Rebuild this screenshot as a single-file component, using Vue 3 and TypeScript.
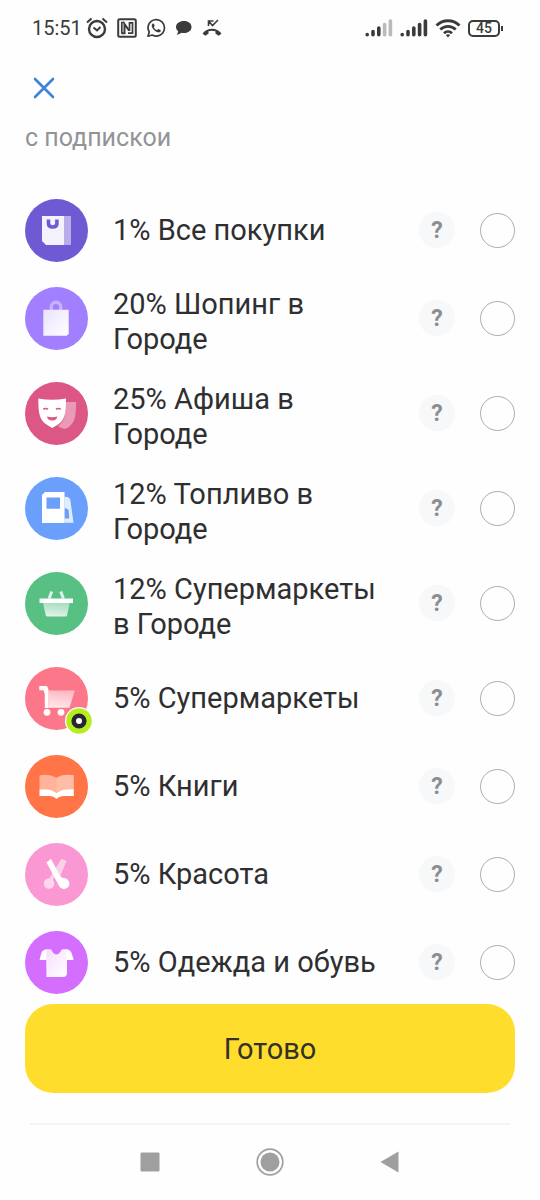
<script setup lang="ts">
import { ref } from 'vue'

interface Category {
  id: string
  title: string
  color: string
  badge?: boolean
}

const categories: Category[] = [
  { id: 'all', title: '1% Все покупки', color: '#6f5ad3' },
  { id: 'shopping', title: '20% Шопинг в Городе', color: '#a27fff' },
  { id: 'events', title: '25% Афиша в Городе', color: '#dc5686' },
  { id: 'fuel', title: '12% Топливо в Городе', color: '#6aa0fb' },
  { id: 'city-market', title: '12% Супермаркеты в Городе', color: '#58c083' },
  { id: 'market', title: '5% Супермаркеты', color: '#fd778b', badge: true },
  { id: 'books', title: '5% Книги', color: '#ff7547' },
  { id: 'beauty', title: '5% Красота', color: '#f998d3' },
  { id: 'clothes', title: '5% Одежда и обувь', color: '#d56dfe' },
]

const selected = ref<string[]>([])
</script>

<template>
  <div class="screen">
    <div class="status">
      <span class="time">15:51</span>
      <div class="status-left">
        <svg width="22" height="22" viewBox="0 0 22 22" fill="none" stroke="#3b3b3b" stroke-width="2.4">
          <circle cx="11" cy="12" r="8" />
          <path d="M1 5.500 5.500 1.500M21 5.500 16.500 1.500" stroke-width="2" />
          <path d="M7.500 10.500 11 13.500l3.500-3.500" stroke-width="2" />
        </svg>
        <svg width="20" height="20" viewBox="0 0 20 20" fill="none" stroke="#3b3b3b" stroke-width="2">
          <rect x="1.200" y="1.200" width="17.600" height="17.600" rx="1.500" />
          <path d="M4.500 15.200h3V6.200l4.700 6.500" />
          <path d="M4.800 15.500v-11h2.700M11 15.200h4.500V4.800h-3V13" stroke-width="1.700" />
        </svg>
        <svg width="20" height="20" viewBox="0 0 20 20">
          <path d="M2 18.200 3.200 14A8.200 8.200 0 1 1 6.300 17Z" fill="none" stroke="#3b3b3b" stroke-width="1.700" stroke-linejoin="round" />
          <path d="M7 5.500c-2 1-1.500 4 1 6.500s5.600 3.200 6.700 1.200c.3-.7.100-1-.4-1.300l-1.700-.8c-.8-.2-1 1.100-1.700.9-1.300-.4-2.500-1.500-3-2.800-.2-.7.900-.9.700-1.700L8 5.900c-.2-.4-.5-.6-1-.4Z" fill="#3b3b3b" />
        </svg>
        <svg width="17" height="16" viewBox="0 0 17 16" fill="#3b3b3b">
          <path d="M9 1c4.500 0 7.500 2.500 7.500 6S13.500 13 9 13c-.8 0-1.500-.1-2.200-.2L2 15l1.200-3.700C1.800 10.200 1 8.700 1 7c0-3.500 3.500-6 8-6Z" />
        </svg>
        <svg width="22" height="20" viewBox="0 0 22 20">
          <path d="M1.500 15.500C6 9 16 9 20.500 15.500l-2.600 2.300-3.400-2v-2.500c-2.200-.8-4.800-.8-7 0v2.500l-3.400 2Z" fill="#3b3b3b" />
          <path d="m8 3.500 3.500 4L17 2M7.500 8V3h5" fill="none" stroke="#3b3b3b" stroke-width="1.600" />
        </svg>
      </div>
      <div class="status-right">
        <svg v-for="n in 2" :key="n" width="28" height="18" viewBox="0 0 28 18" stroke-width="3.600" stroke-linecap="round" stroke="#3b3b3b">
          <path d="M2.200 15.500v.3M8 12.500v3.300M13.800 9v6.800" />
          <path d="M19.600 5.500v10.300M25.400 2v13.800" :stroke="n === 1 ? '#bababa' : '#3b3b3b'" />
        </svg>
        <svg width="26" height="20" viewBox="0 0 26 20" fill="none" stroke="#3b3b3b" stroke-width="2.800">
          <path d="M1.500 7.500a16.300 16.300 0 0 1 23 0M5.300 11.500a11 11 0 0 1 15.400 0M9 15.200a5.700 5.700 0 0 1 8 0" />
          <path d="m10.800 17 2.200 2.500 2.200-2.500q-2.200-1.600-4.400 0Z" fill="#3b3b3b" stroke="none" />
        </svg>
        <span class="battery">45</span>
      </div>
    </div>

    <header class="header">
      <button class="close" type="button" aria-label="Закрыть">
        <svg width="22" height="22" viewBox="0 0 22 22" fill="none" stroke="#3b82dc" stroke-width="2.600" stroke-linecap="round">
          <path d="m2 2 18 18M20 2 2 20" />
        </svg>
      </button>
    </header>

    <main class="content">
      <p class="subtitle">с подпиской</p>
      <ul class="list">
        <li v-for="item in categories" :key="item.id" class="row">
          <svg class="icon" viewBox="0 0 63 63" fill="#fff" aria-hidden="true">
            <defs>
              <linearGradient :id="'fade-' + item.id" x1="1" y1="1" x2="0" y2="0">
                <stop offset="0" stop-color="#fff" />
                <stop offset="1" stop-color="#fff" stop-opacity=".78" />
              </linearGradient>
              <linearGradient :id="'drop-' + item.id" x1="0" y1="1" x2="0.200" y2="0">
                <stop offset="0" stop-color="#fff" stop-opacity=".85" />
                <stop offset="1" stop-color="#fff" stop-opacity=".5" />
              </linearGradient>
            </defs>
            <circle cx="31.500" cy="31.500" r="31.500" :fill="item.color" />
            <g v-if="item.id === 'all'">
              <path d="M17 17h22v29H21l-4-4Z" opacity=".92" />
              <path d="M39 17h7v29h-7Z" opacity=".5" />
              <path d="M23.500 20.500v4q0 3.500 4.200 3.500t4.200-3.500v-4" fill="none" :stroke="item.color" stroke-width="3.600" />
            </g>
            <g v-else-if="item.id === 'shopping'">
              <path d="M26.300 23v-3a4.700 4.700 0 0 1 9.400 0v3" fill="none" stroke="#fff" stroke-width="3.400" opacity=".4" />
              <path d="M18.300 22.700h25.400v24l-2 2H18.300Z" :fill="'url(#fade-' + item.id + ')'" />
            </g>
            <g v-else-if="item.id === 'events'">
              <path d="M40 20h11c0 15-1 20-7 25-4 3-7 2-11-1 7-5 8-12 7-24Z" opacity=".4" />
              <path d="M13.300 16.500Q27 19 41 16.500C41 31 40 38 33 42.500L27.200 46 21.500 42.500C14.500 38 13.300 31 13.300 16.500Z" />
              <path d="M22 34.500q5.200 1.600 10.400 0-.6 4-5.200 4T22 34.500Z" :fill="item.color" />
              <path d="M18.300 27.300q2.300-1.600 4.600 0M31 27.300q2.300-1.600 4.600 0" fill="none" :stroke="item.color" stroke-width="1.700" />
            </g>
            <g v-else-if="item.id === 'fuel'">
              <path fill-rule="evenodd" d="M20 15h19.500v31H17V18Zm1.500 5.500v11.300H35V20.500Z" />
              <path fill-rule="evenodd" d="M39.500 19.800q5-.2 5.800 3l3.200 23h-9Zm1 11-.8 1.800v9h4.600l-.7-8.600Z" opacity=".8" />
            </g>
            <g v-else-if="item.id === 'city-market'">
              <path d="m24.200 26.500 2.500-7M38.300 26.500l-2.500-7" fill="none" stroke="#fff" stroke-width="3" opacity=".8" />
              <path d="M18 31h26.700L42 43.500l-1 1H22l-1.200-1Z" :fill="'url(#drop-' + item.id + ')'" />
              <path d="M14.500 26.500H48V31H14.500Z" />
            </g>
            <g v-else-if="item.id === 'market'">
              <path d="M14.300 19H22l1.500 3.500V41h-3.700V27L18.500 23.200h-4.200Z" />
              <path d="M23.500 23.500h26.300l-5.300 17.300h-21Z" :fill="'url(#drop-' + item.id + ')'" />
              <circle cx="22" cy="45.300" r="3.400" /><circle cx="36" cy="45.300" r="3.400" />
            </g>
            <g v-else-if="item.id === 'books'">
              <path d="M14.500 20.300q10-2 17 2.400 7-4.400 17.300-2.400V35q-11-2-17.300 3-6-5-17-3Z" opacity=".45" />
              <path d="M31.500 22.700q7-4.400 17.300-2.400V35q-11-2-17.300 3Z" opacity=".14" />
              <path d="M14.500 34.600q11-1.800 17 3.400 6.300-5.200 17.300-3.400v6.500H39q-4.500 0-7.500 3-3-3-7.500-3h-9.500Z" />
            </g>
            <g v-else-if="item.id === 'beauty'">
              <path d="m36.500 15.800 5 2.200L35 33.500l-3-4.500-4.500 8.500-3-2.500Z" opacity=".55" />
              <circle cx="24" cy="40.500" r="5.300" opacity=".6" />
              <path d="M21.500 19.500 26 15.800 34.500 32q2.500 3.500 6 3.500l-1 10q-4.500 0-6.500-4.500Z" />
              <circle cx="39" cy="40.500" r="5.400" />
            </g>
            <g v-else>
              <path d="M21.500 18.300q-4.500.7-5.500 5L14.500 29h7ZM41.500 18.300q4.500.7 5.500 5L48.700 29h-7.200Z" />
              <path d="M21 18.300h5q5.300 10.500 11 0h5v24q0 3.700-4 3.700H21.500Z" :fill="'url(#fade-' + item.id + ')'" />
            </g>
          </svg>
          <svg v-if="item.badge" class="badge" viewBox="0 0 28 28" aria-hidden="true">
            <circle cx="14" cy="14" r="14" fill="#fff" />
            <circle cx="14" cy="14" r="12.800" fill="#b4ee1f" />
            <circle cx="14" cy="14" r="5.300" fill="#fff" stroke="#292730" stroke-width="4.600" />
          </svg>
          <label class="title" :for="item.id">{{ item.title }}</label>
          <button class="help" type="button" :aria-label="'Подробнее: ' + item.title">?</button>
          <input :id="item.id" v-model="selected" class="check" type="checkbox" :value="item.id" />
        </li>
      </ul>
    </main>

    <footer class="footer">
      <button class="done" type="button">Готово</button>
    </footer>

    <nav class="nav">
      <button type="button" aria-label="Недавние">
        <svg width="28" height="28" viewBox="0 0 28 28" fill="#9f9f9f"><rect x="4.500" y="4.500" width="19" height="19" rx="1" /></svg>
      </button>
      <button type="button" aria-label="Домой">
        <svg width="28" height="28" viewBox="0 0 28 28"><circle cx="14" cy="14" r="12.800" fill="none" stroke="#9f9f9f" stroke-width="1.700" /><circle cx="14" cy="14" r="9.500" fill="#9f9f9f" /></svg>
      </button>
      <button type="button" aria-label="Назад">
        <svg width="28" height="28" viewBox="0 0 28 28" fill="#9f9f9f"><path d="M22.500 3.500v21L4.500 14Z" /></svg>
      </button>
    </nav>
  </div>
</template>

<style>
body {
  margin: 0;
  background: #fefefe;
}
</style>

<style scoped>
.screen {
  display: flex;
  flex-direction: column;
  min-height: 100vh;
  background: #fefefe;
  color: #2f2f31;
  font-family: Roboto, "Noto Sans", sans-serif;
}
button {
  display: flex;
  align-items: center;
  justify-content: center;
  margin: 0;
  padding: 0;
  border: 0;
  background: none;
  color: inherit;
  font-family: inherit;
  cursor: pointer;
}
.status {
  display: flex;
  align-items: center;
  height: 56px;
  padding: 0 40px 0 32px;
  color: #3b3b3b;
}
.time {
  margin-right: 4px;
  font-size: 20px;
}
.status-left,
.status-right {
  display: flex;
  align-items: center;
  gap: 9px;
}
.status-right {
  gap: 7px;
  margin-left: auto;
}
.battery {
  position: relative;
  box-sizing: border-box;
  width: 32px;
  border: 2px solid #3b3b3b;
  border-radius: 5px;
  font-size: 14px;
  font-weight: 500;
  line-height: 13px;
  text-align: center;
}
.battery::after {
  content: "";
  position: absolute;
  top: 4px;
  right: -5px;
  width: 2px;
  height: 5px;
  background: #3b3b3b;
}
.header {
  padding: 12px 24px 24px;
}
.close {
  width: 40px;
  height: 40px;
}
.content {
  overflow: hidden;
}
.subtitle {
  margin: -12px 25px 44px;
  color: #919397;
  font-size: 25px;
  line-height: 35px;
}
.list {
  display: flex;
  flex-direction: column;
  gap: 25px;
  margin: 0;
  padding: 0 25px;
  list-style: none;
}
.row {
  position: relative;
  display: flex;
  align-items: flex-start;
}
.icon {
  flex: none;
  width: 63px;
  height: 63px;
}
.badge {
  position: absolute;
  top: 40px;
  left: 40px;
  width: 28px;
  height: 28px;
}
.title {
  display: flex;
  flex: 1;
  align-items: center;
  min-height: 63px;
  margin: 0 25px;
  font-size: 29px;
  line-height: 35px;
}
.help {
  flex: none;
  width: 36px;
  height: 36px;
  margin: 13px 25px 0 0;
  border-radius: 50%;
  background: #f7f8f9;
  color: #8b8d91;
  font-size: 23px;
  font-weight: 700;
}
.check {
  flex: none;
  appearance: none;
  box-sizing: border-box;
  width: 35px;
  height: 35px;
  margin: 14px 0 0;
  border: 1px solid #adadaf;
  border-radius: 50%;
  background: #fefefe;
}
.check:checked {
  border: 10px solid #ffdd2d;
}
.footer {
  padding: 10px 25px 30px;
}
.done {
  width: 100%;
  height: 89px;
  border-radius: 28px;
  background: #ffdd2d;
  color: #33312a;
  font-size: 29px;
}
.nav {
  display: flex;
  justify-content: center;
  gap: 92px;
  margin: 0 30px;
  padding: 23px 0;
  border-top: 2px solid #f4f4f4;
}
</style>
